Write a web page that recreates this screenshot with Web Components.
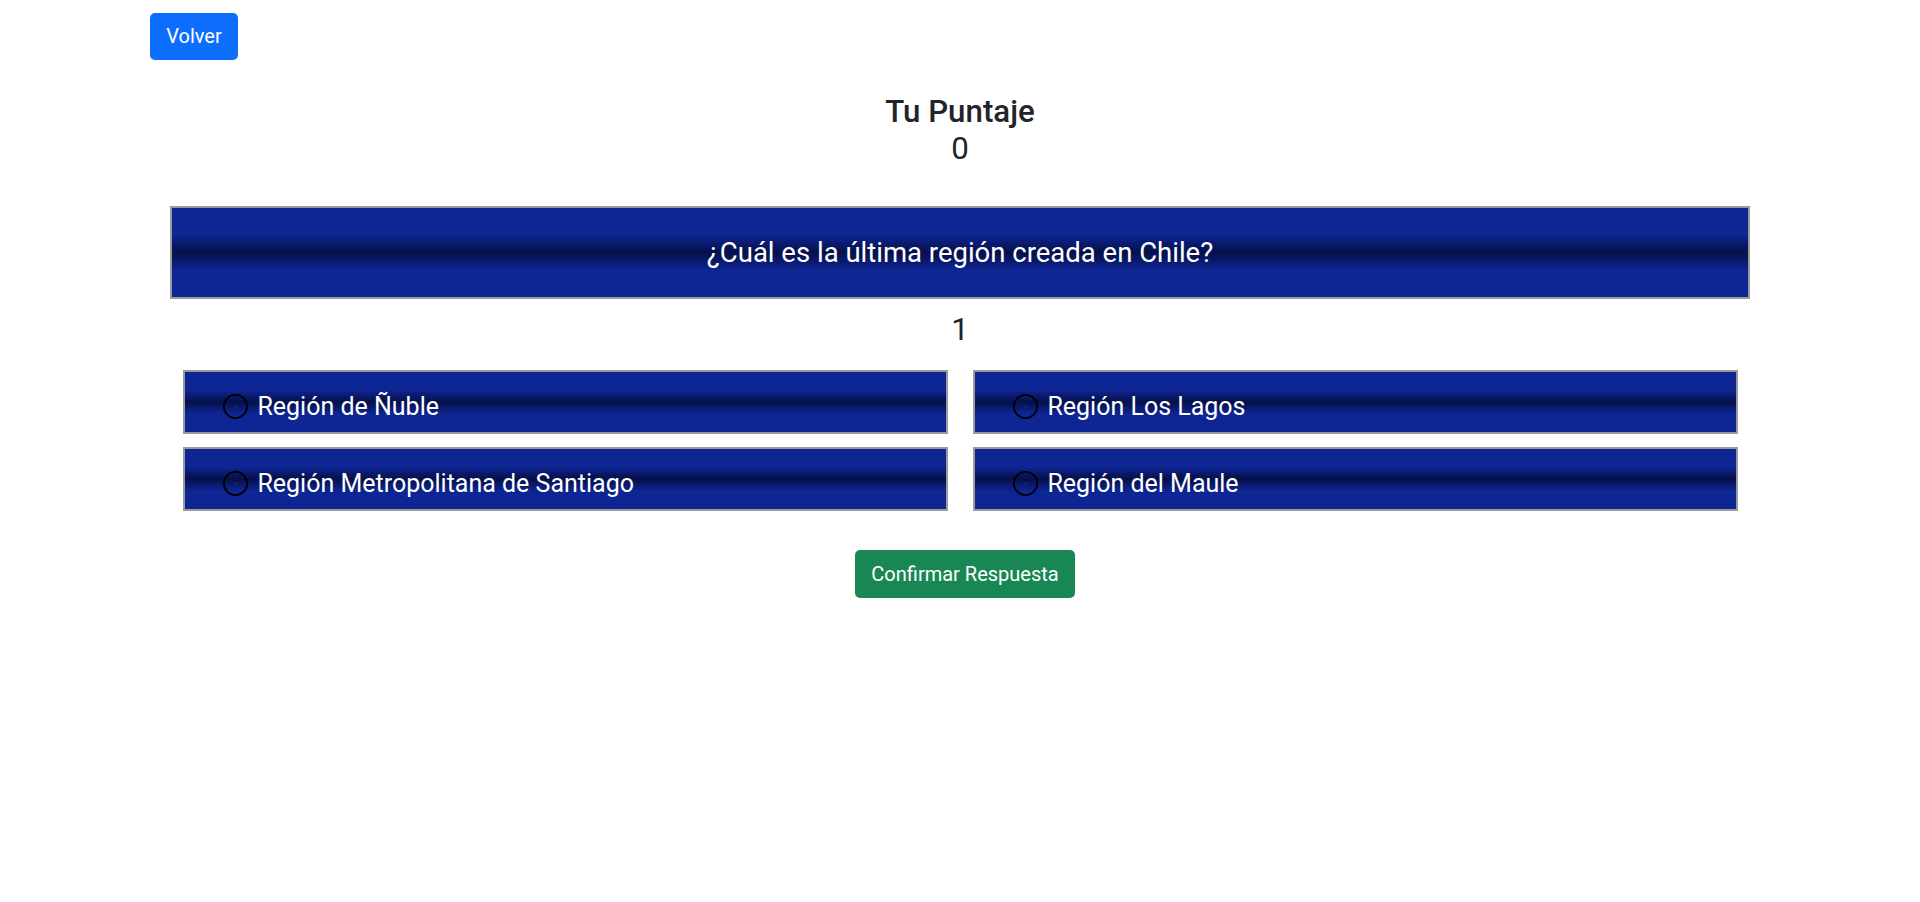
<!DOCTYPE html>
<html lang="es">
<head>
<meta charset="utf-8">
<title>Preguntas</title>
<style>
html,body{margin:0;background:#fff}
body{font-family:Roboto,"Liberation Sans",sans-serif;font-size:20px;line-height:30px;color:#212529}
</style>
</head>
<body>
<quiz-app></quiz-app>
<script>
const define=(name,html)=>customElements.define(name,class extends HTMLElement{
  constructor(){
    super();
    const t=document.createElement('template');
    t.innerHTML=html;
    this.attachShadow({mode:'open'}).append(t.content.cloneNode(true));
  }
});
define('quiz-button',`<style>
:host{display:inline-block}
button{display:block;box-sizing:border-box;width:100%;height:100%;margin:0;padding:var(--pad,0);border:0;border-radius:5px;background:var(--fill,#0d6efd);color:#fff;font:inherit;line-height:30px}
</style><button type="button"><slot></slot></button>`);
define('quiz-score',`<style>
:host{display:block;text-align:center;font-size:31.25px;line-height:37px}
h4{margin:0;font-size:31.25px;font-weight:500;line-height:37px}
</style><h4>Tu Puntaje</h4><div><slot></slot></div>`);
define('quiz-question',`<style>
:host{display:flex;align-items:center;justify-content:center;box-sizing:border-box;height:93px;border:2px solid #9b9b9b;background:linear-gradient(#0e2594 30%,#051049 50%,#0e2594 70%);color:#fff;font-size:27.5px;line-height:34px}
</style><span><slot></slot></span>`);
define('quiz-option',`<style>
:host{display:block;box-sizing:border-box;height:64px;padding:16px 0 0 38px;border:2px solid #9b9b9b;background:linear-gradient(#0e2594 30%,#051049 50%,#0e2594 70%);color:#fff;font-size:25px;line-height:38px}
label{display:flex;align-items:center;gap:9.4px}
svg{display:block;flex:none;margin-top:-1px}
</style><label><svg width="25" height="25" viewBox="0 0 25 25" role="img"><circle cx="12.5" cy="12.5" r="11.6" fill="none" stroke="#000" stroke-width="1.8"/><path d="M12 12h1v1h-1z" fill="#555a70"/></svg><span><slot></slot></span></label>`);
define('quiz-app',`<style>
:host{display:flow-root;width:1620px;margin:0 auto}
.back{--pad:0 0 2px;display:block;width:88px;height:47px;margin-top:13px}
quiz-score{margin-top:33px}
quiz-question{margin:39px 20px 0}
.number{margin-top:13px;text-align:center;font-size:31.25px;line-height:36px}
.options{display:grid;grid-template-columns:1fr 1fr;gap:13px 25px;margin:22px 32px 0 33px}
footer{display:flex;justify-content:center;padding-left:9px;margin-top:39px}
.confirm{--fill:#198754;--pad:0 0 0 1px;width:220px;height:48px}
</style>
<quiz-button class="back">Volver</quiz-button>
<quiz-score>0</quiz-score>
<quiz-question>¿Cuál es la última región creada en Chile?</quiz-question>
<div class="number">1</div>
<div class="options">
<quiz-option>Región de Ñuble</quiz-option>
<quiz-option>Región Los Lagos</quiz-option>
<quiz-option>Región Metropolitana de Santiago</quiz-option>
<quiz-option>Región del Maule</quiz-option>
</div>
<footer><quiz-button class="confirm">Confirmar Respuesta</quiz-button></footer>`);
</script>
</body>
</html>
